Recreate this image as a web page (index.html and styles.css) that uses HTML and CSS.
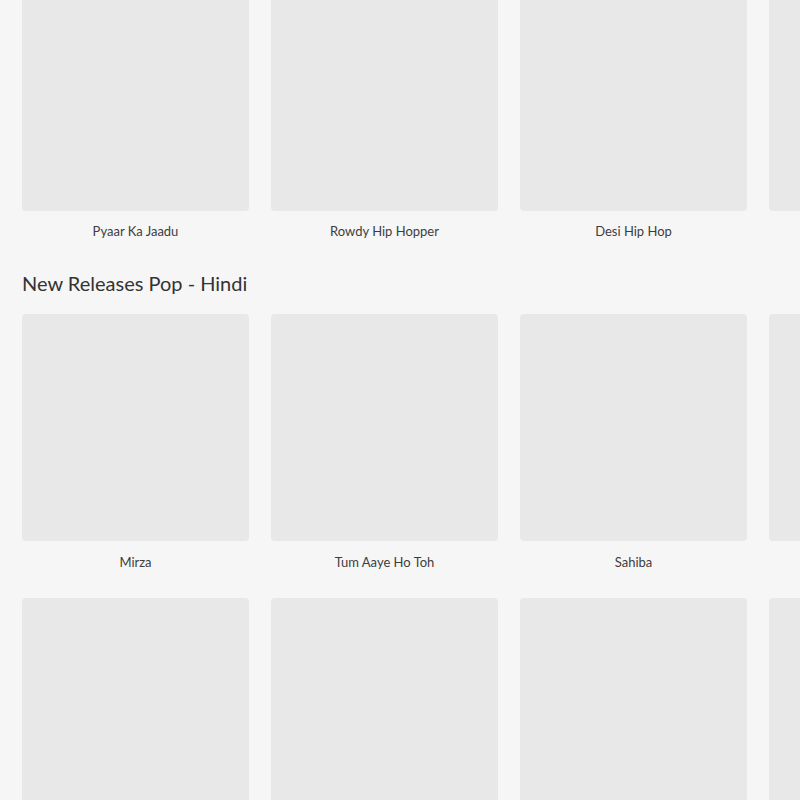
FILE: index.html
```html
<!DOCTYPE html>
<html>
<head>
<meta charset="utf-8">
<link rel="stylesheet" href="styles.css">
</head>
<body>
<div class="page">
  <section class="section first">
    <div class="row">
      <div class="card"><div class="tile"></div><div class="title">Pyaar Ka Jaadu</div></div>
      <div class="card"><div class="tile"></div><div class="title">Rowdy Hip Hopper</div></div>
      <div class="card"><div class="tile"></div><div class="title">Desi Hip Hop</div></div>
      <div class="card"><div class="tile"></div><div class="title"></div></div>
    </div>
  </section>
  <section class="section">
    <h2 class="heading">New Releases Pop - Hindi</h2>
    <div class="row">
      <div class="card"><div class="tile"></div><div class="title">Mirza</div></div>
      <div class="card"><div class="tile"></div><div class="title">Tum Aaye Ho Toh</div></div>
      <div class="card"><div class="tile"></div><div class="title">Sahiba</div></div>
      <div class="card"><div class="tile"></div><div class="title"></div></div>
    </div>
    <div class="row">
      <div class="card"><div class="tile"></div><div class="title"></div></div>
      <div class="card"><div class="tile"></div><div class="title"></div></div>
      <div class="card"><div class="tile"></div><div class="title"></div></div>
      <div class="card"><div class="tile"></div><div class="title"></div></div>
    </div>
  </section>
</div>
</body>
</html>
```
FILE: styles.css
```css
html, body {
  margin: 0;
  padding: 0;
  background: #f6f6f6;
  overflow: hidden;
  height: 800px;
}
body {
  font-family: Lato, "Open Sans", sans-serif;
  color: #444;
}
.page {
  padding-left: 22px;
  margin-top: -16px;
}
.section.first .row {
  margin-bottom: 31px;
}
.section.first .title {
  margin-top: 11px;
}
.heading {
  margin: 0 0 19px 0;
  font-size: 20px;
  line-height: 24px;
  font-weight: 400;
  color: #333;
}
.row {
  display: flex;
  gap: 22px;
  margin-bottom: 27px;
}
.card {
  flex: 0 0 227px;
  width: 227px;
}
.tile {
  width: 227px;
  height: 227px;
  background: #e8e8e8;
  border-radius: 4px;
}
.title {
  margin-top: 12px;
  height: 18px;
  line-height: 18px;
  font-size: 13px;
  text-align: center;
  color: #3d3d3d;
}
```
